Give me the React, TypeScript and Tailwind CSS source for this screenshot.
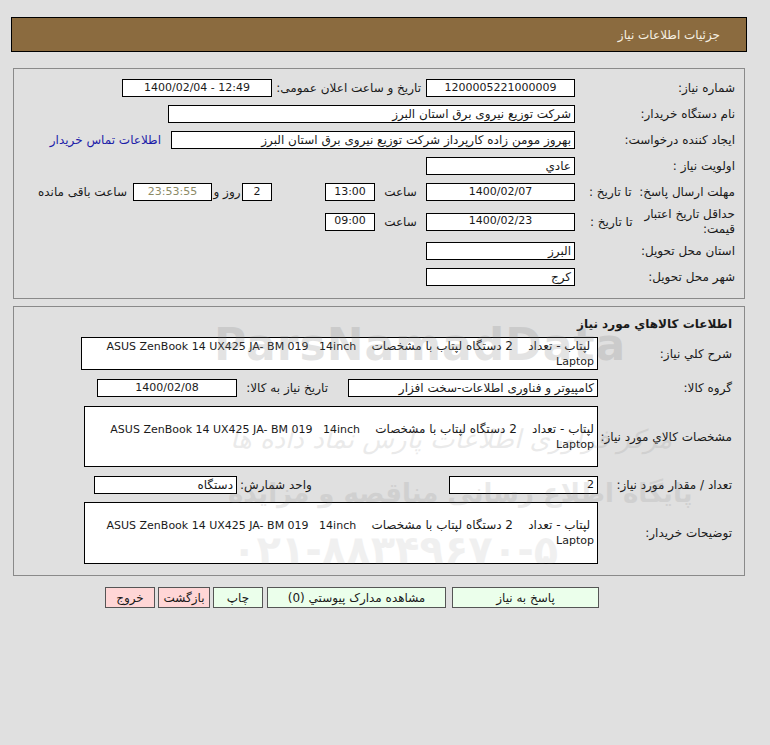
import React from 'react';

const Box = ({ w, h = 18, children, className = '' }: { w: number; h?: number; children?: React.ReactNode; className?: string }) => (
  <div
    className={`border border-black bg-white flex items-center px-[3px] whitespace-nowrap overflow-hidden shrink-0 ${className}`}
    style={{ width: w, height: h }}
  >
    {children}
  </div>
);

const TextArea = ({ w, h, lead = ' ' }: { w: number; h: number; lead?: string }) => (
  <div className="border border-black bg-white flex flex-col justify-center items-start pr-[3px] leading-[15px] shrink-0 overflow-hidden" style={{ width: w, height: h }}>
    <div className="whitespace-pre">
      {lead + 'لپتاب - تعداد    2 دستگاه لپتاب با مشخصات    '}
      <span className="text-[11px]">ASUS ZenBook 14 UX425 JA- BM 019   14inch</span>
    </div>
    <div className="text-[11px]">Laptop</div>
  </div>
);

function Row1Label({ children }: { children: React.ReactNode }) {
  return <div className="w-[160px] shrink-0 text-right">{children}</div>;
}

function Row2Label({ children }: { children: React.ReactNode }) {
  return <div className="w-[134px] shrink-0 text-right">{children}</div>;
}

export default function App() {
  return (
    <div className="relative min-h-[745px] bg-[#e0e0e0] text-[12px] text-[#1a1a1a] font-['DejaVu_Sans',sans-serif] pt-[17px] overflow-hidden">
      {/* header */}
      <div dir="rtl" className="ml-[11px] w-[736px] h-[35px] border border-black bg-[#8b6b3f] flex items-center pr-[26px] text-[#f6f0e2]">
        جزئیات اطلاعات نیاز
      </div>

      {/* panel 1 */}
      <div dir="rtl" className="ml-[13px] mt-[16px] w-[732px] border border-[#8a8a8a] pt-[6px] pb-[8px] pr-[9px]">
        <div className="flex items-center h-[26px]">
          <Row1Label>شماره نیاز:</Row1Label>
          <Box w={149} className="justify-center text-[11px]">1200005221000009</Box>
          <div className="w-[154px] shrink-0 text-right pr-[5px]">تاریخ و ساعت اعلان عمومی:</div>
          <Box w={150} className="justify-center text-[11px]"><span dir="ltr">1400/02/04 - 12:49</span></Box>
        </div>
        <div className="flex items-center h-[26px]">
          <Row1Label>نام دستگاه خریدار:</Row1Label>
          <Box w={407}>شرکت توزیع نیروی برق استان البرز</Box>
        </div>
        <div className="flex items-center h-[26px]">
          <Row1Label>ایجاد کننده درخواست:</Row1Label>
          <Box w={404}>بهروز مومن زاده کارپرداز شرکت توزیع نیروی برق استان البرز</Box>
          <a className="mr-[10px] text-[#1c1ca8]">اطلاعات تماس خریدار</a>
        </div>
        <div className="flex items-center h-[26px]">
          <Row1Label>اولویت نیاز :</Row1Label>
          <Box w={149}>عادي</Box>
        </div>
        <div className="flex items-center h-[26px]">
          <div className="w-[160px] shrink-0 flex justify-between pl-[14px]">
            <span>مهلت ارسال پاسخ:</span>
            <span>تا تاریخ :</span>
          </div>
          <Box w={149} className="justify-center text-[11px]">1400/02/07</Box>
          <div className="w-[51px] shrink-0 text-center">ساعت</div>
          <Box w={50} className="justify-center text-[11px]">13:00</Box>
          <div className="w-[53px] shrink-0" />
          <Box w={30} className="justify-center text-[11px]">2</Box>
          <div className="w-[30px] shrink-0 text-center">روز و</div>
          <Box w={79} className="justify-center text-[11px] bg-[#efeec9] text-[#8b8a66]">23:53:55</Box>
          <div className="pr-[6px]">ساعت باقی مانده</div>
        </div>
        <div className="flex items-center h-[33px]">
          <div className="w-[160px] shrink-0 flex items-center justify-between pl-[15px]">
            <span className="w-[96px] leading-[15px]">حداقل تاریخ اعتبار قیمت:</span>
            <span>تا تاریخ :</span>
          </div>
          <Box w={149} className="justify-center text-[11px]">1400/02/23</Box>
          <div className="w-[51px] shrink-0 text-center">ساعت</div>
          <Box w={50} className="justify-center text-[11px]">09:00</Box>
        </div>
        <div className="flex items-center h-[26px]">
          <Row1Label>استان محل تحویل:</Row1Label>
          <Box w={149}>البرز</Box>
        </div>
        <div className="flex items-center h-[26px]">
          <Row1Label>شهر محل تحویل:</Row1Label>
          <Box w={149}>کرج</Box>
        </div>
      </div>

      {/* panel 2 */}
      <div dir="rtl" className="ml-[13px] mt-[7px] w-[732px] border border-[#8a8a8a] pt-[6px] pb-[11px] pr-[12px]">
        <div className="h-[22px] mb-[2px] flex items-center font-bold">اطلاعات کالاهاي مورد نیاز</div>
        <div className="flex items-center">
          <Row2Label>شرح کلي نیاز:</Row2Label>
          <TextArea w={517} h={33} />
        </div>
        <div className="flex items-center mt-[9px]">
          <Row2Label>گروه کالا:</Row2Label>
          <Box w={250}>کامپیوتر و فناوری اطلاعات-سخت افزار</Box>
          <div className="w-[111px] shrink-0 text-right pr-[20px]">تاریخ نیاز به کالا:</div>
          <Box w={140} className="justify-center text-[11px]">1400/02/08</Box>
        </div>
        <div className="flex items-center mt-[9px]">
          <Row2Label>مشخصات کالاي مورد نیاز:</Row2Label>
          <TextArea w={514} h={61} lead="" />
        </div>
        <div className="flex items-center mt-[9px]">
          <Row2Label>تعداد / مقدار مورد نیاز:</Row2Label>
          <Box w={149} className="text-[11px]">2</Box>
          <div className="w-[212px] shrink-0 text-left pl-[3px]">واحد شمارش:</div>
          <Box w={143}>دستگاه</Box>
        </div>
        <div className="flex items-center mt-[8px]">
          <Row2Label>توضیحات خریدار:</Row2Label>
          <TextArea w={514} h={62} />
        </div>
      </div>

      {/* buttons */}
      <div dir="rtl" className="ml-[13px] w-[732px] mt-[11px] pr-[146px] flex">
        <button className="w-[147px] h-[21px] border border-[#555] bg-[#ebffeb]">پاسخ به نیاز</button>
        <button className="w-[179px] h-[21px] mr-[6px] border border-[#555] bg-[#ebffeb]">مشاهده مدارک پیوستي (0)</button>
        <button className="w-[50px] h-[21px] mr-[4px] border border-[#555] bg-[#ebffeb]">چاپ</button>
        <button className="w-[52px] h-[21px] mr-[3px] border border-[#555] bg-[#ffd6d6]">بازگشت</button>
        <button className="w-[50px] h-[21px] mr-[3px] border border-[#555] bg-[#ffd6d6]">خروج</button>
      </div>

      {/* watermark */}
      <div className="pointer-events-none absolute left-[214px] top-[312px] text-[44px] font-bold tracking-[1px] text-[#7a7a7a] opacity-20">ParsNamadData</div>
      <div dir="rtl" className="pointer-events-none absolute left-[230px] top-[420px] text-[26px] italic text-[#7a7a7a] opacity-15">مرکز فراوری اطلاعات پارس نماد داده ها</div>
      <div dir="rtl" className="pointer-events-none absolute left-[228px] top-[474px] text-[26px] font-bold text-[#7a7a7a] opacity-15">پایگاه اطلاع رسانی مناقصه و مزایده</div>
      <div className="pointer-events-none absolute left-[232px] top-[520px] text-[40px] font-bold text-[#7a7a7a] opacity-10">۰۲۱-۸۸۳۴۹۶۷۰-۵</div>
    </div>
  );
}
